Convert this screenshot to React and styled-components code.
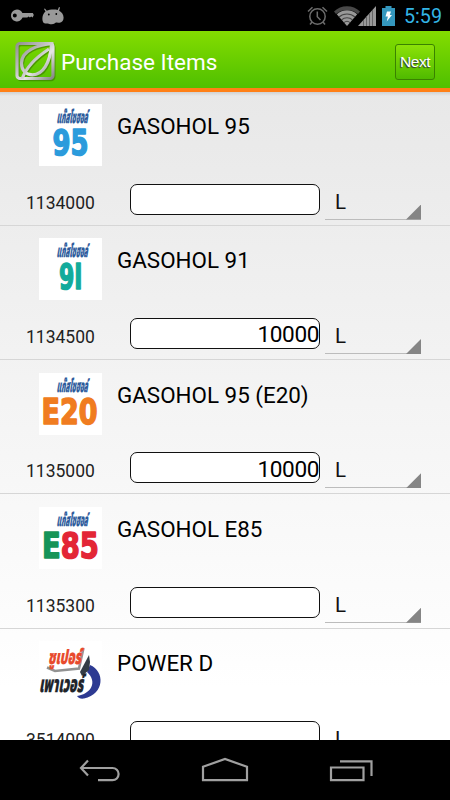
import React from 'react';
import styled, { createGlobalStyle } from 'styled-components';

const GlobalStyle = createGlobalStyle`
  * {
    box-sizing: border-box;
  }
  body {
    margin: 0;
    background: #000;
    font-family: Roboto, "Noto Sans", sans-serif;
  }
`;

const Screen = styled.div`
  width: 450px;
  height: 800px;
  display: flex;
  flex-direction: column;
  overflow: hidden;
  background: #000;
`;

const StatusBar = styled.div`
  flex: none;
  height: 31px;
  display: flex;
  align-items: center;
  justify-content: space-between;
  padding: 0 8px 0 11px;
`;

const StatusGroup = styled.div`
  display: flex;
  align-items: center;
  gap: ${(props) => props.$gap || 0}px;
  svg {
    display: block;
    overflow: visible;
  }
`;

const Clock = styled.span`
  margin-left: 3px;
  font-size: 19.7px;
  line-height: 31px;
  padding-top: 2px;
  color: #33b5e5;
`;

const ActionBar = styled.header`
  flex: none;
  height: 61px;
  display: flex;
  align-items: center;
  padding: 0 15px 0 14px;
  background: linear-gradient(#84dc00, #4fc000);
  border-bottom: 4px solid #ff7f16;
  svg {
    display: block;
    margin-top: 4px;
  }
`;

const Title = styled.h1`
  flex: 1;
  margin: 4px 0 0 5px;
  font-size: 22.5px;
  font-weight: 400;
  color: #fff;
`;

const NextButton = styled.button`
  width: 40px;
  height: 36px;
  margin-top: 4px;
  padding: 0;
  border: 1px solid #3a8200;
  border-radius: 3px;
  background: linear-gradient(#8ce208, #4fba00);
  font-family: "Liberation Sans", Arial, sans-serif;
  font-size: 15.5px;
  letter-spacing: -0.5px;
  color: #fff;
  text-shadow: -1px 1px 1px #333;
`;

const List = styled.ul`
  flex: 1;
  min-height: 0;
  margin: 0;
  padding: 0;
  overflow: hidden;
  list-style: none;
  background: linear-gradient(#d2d2d2, rgba(232, 232, 232, 0) 4px), linear-gradient(#e8e8e8, #fff 92%);
`;

const Item = styled.li`
  height: 134.4px;
  display: flex;
  flex-direction: column;
  justify-content: space-between;
  padding: 12.8px 29px 5px 26px;
  border-bottom: 1.4px solid #d6d6d6;

  &:first-child {
    height: 133.5px;
    padding-top: 12px;
  }
`;

const Product = styled.div`
  display: flex;
  align-items: flex-start;
  padding-left: 13px;
`;

const Thumb = styled.svg`
  flex: none;
  width: 63px;
  height: 62px;
  background: #fff;
  overflow: visible;
`;

const Name = styled.span`
  margin: 8px 0 0 15px;
  font-size: 22.4px;
  line-height: 28px;
  color: #000;
`;

const Order = styled.div`
  display: flex;
  align-items: flex-end;
`;

const Code = styled.span`
  width: 104px;
  font-size: 17.5px;
  line-height: 34px;
  color: #222;
`;

const Amount = styled.input`
  width: 190px;
  height: 31px;
  margin-bottom: 5px;
  padding: 3px 0 0;
  border: 1px solid #111;
  border-radius: 7px;
  background: #fff;
  font: 22.6px Roboto, sans-serif;
  letter-spacing: -0.4px;
  text-align: right;
  color: #000;
  outline: none;
`;

const Unit = styled.div`
  width: 96px;
  height: 34px;
  margin-left: 5px;
  padding-left: 10px;
  border-bottom: 1px solid #bcbcbc;
  display: flex;
  justify-content: space-between;
  font-size: 20.5px;
  line-height: 32px;
  color: #111;
`;

const Triangle = styled.i`
  align-self: flex-end;
  width: 15px;
  height: 15px;
  margin-bottom: -1px;
  background: #858585;
  clip-path: polygon(100% 0, 100% 100%, 0 100%);
`;

const NavBar = styled.nav`
  flex: none;
  height: 60px;
  display: flex;
  justify-content: center;
  align-items: center;
  gap: 80px;
  background: #000;
`;

const KeyIcon = () => (
  <svg width="23" height="13" viewBox="0 0 23 13">
    <path
      fill="#999"
      fillRule="evenodd"
      d="M6 .5a5.900 5.900 0 0 1 5.400 3.600h10.400l1 2-1.200 2.300-1.400-.8-1.300 1-1.300-1-1.300 1h-4.700A6 6 0 1 1 6 .5zM3.800 4.600a2 2 0 1 0 0 4 2 2 0 0 0 0-4z"
    />
  </svg>
);

const DroidIcon = () => (
  <svg width="22" height="18" viewBox="0 0 22 18">
    <path
      fill="#999"
      d="M3.500 4.500 2 2l.9-.5 1.900 2.200C7 2.700 12 2.100 15.700 3L17 0l1 .4-.9 3.400c2.700 1.300 4.500 4 4.500 7 0 3-1.800 4.900-4 4.900-1.200 0-2-.4-3.200-.3-1.400.2-2 1.700-4.800 1.900-1.700.1-2.500-.7-3.800-.8-1.700-.1-3.600.4-4.600-1.300C-.4 12 .5 6.800 3.500 4.500z"
    />
    <circle cx="6.800" cy="7.500" r=".9" fill="#000" />
    <circle cx="14.300" cy="7" r=".9" fill="#000" />
  </svg>
);

const AlarmIcon = () => (
  <svg width="21" height="20" viewBox="0 0 21 20" fill="none" stroke="#6c6c6c" strokeWidth="1.500">
    <circle cx="10.500" cy="10.500" r="7.700" />
    <path d="M10.300 5.500v5.300l3.200 3.200M1 5.500 5.500 1.300M15.500 1.300 20 5.500M5 16l-2 2.500M16 16l2 2.500" />
  </svg>
);

const WifiIcon = () => (
  <svg width="24" height="20" viewBox="0 0 24 20">
    <path d="M0 5.500a19 19 0 0 1 26 0L24 8A17 17 0 0 0 2 8z" fill="#484848" />
    <path d="M2.800 8.200a15.500 15.500 0 0 1 20.400 0L13 20z" fill="#999" />
    <path d="M5 11a12 12 0 0 1 16 0M7.500 13.800a8.200 8.200 0 0 1 11 0M10 16.600a4.500 4.500 0 0 1 6 0" fill="none" stroke="#444" strokeWidth="1.100" />
  </svg>
);

const SignalIcon = () => (
  <svg width="18" height="20" viewBox="0 0 18 20">
    <path d="M0 20 18 0v20z" fill="#999" />
    <path d="M5.500 14v6M8.500 10.500V20M11.500 7v13M14.500 4v16" stroke="#666" />
  </svg>
);

const BatteryIcon = () => (
  <svg width="13" height="20" viewBox="0 0 13 20">
    <path d="M3.500 0h6v2H13v18H0V2h3.500z" fill="#3497bd" />
    <path d="M5 5.500h4L7.800 9H10l-5.300 6.500 1.200-5H3.500z" fill="#fff" />
  </svg>
);

const leafPath = 'M39.500 2.500C22 4 7.500 10 7.500 22c0 8 5 11.800 11 11.800C29 33.800 36 22 37.500 4';
const stemPath = 'M8 38C13 24 24 15 35 8';

const LeafLogo = () => (
  <svg width="42" height="41" viewBox="0 0 42 41" fill="none">
    <defs>
      <linearGradient id="metal" x1="0" y1="0" x2="1" y2="1">
        <stop offset="0" stopColor="#929292" />
        <stop offset=".35" stopColor="#bdbdbd" />
        <stop offset=".6" stopColor="#e6e6e6" />
        <stop offset="1" stopColor="#858585" />
      </linearGradient>
    </defs>
    <g stroke="#397400" strokeWidth="3" opacity=".6" transform="translate(1 1.200)">
      <rect x="3" y="2.500" width="36" height="35" rx="3" />
      <path d={leafPath} />
      <path d={stemPath} />
    </g>
    <g stroke="url(#metal)" strokeWidth="3.200">
      <rect x="3" y="2.500" width="36" height="35" rx="3" />
      <path d={leafPath} />
      <path d={stemPath} />
    </g>
  </svg>
);

const Brand = ({ x, y, width, size = 17, color = '#2c5a9b', children }) => (
  <text
    x={x}
    y={y}
    transform="skewX(-10)"
    textLength={width}
    lengthAdjust="spacingAndGlyphs"
    fontFamily='"Noto Sans Thai", "Noto Sans", sans-serif'
    fontSize={size}
    fontWeight="900"
    fill={color}
    stroke={color}
    strokeWidth=".3"
  >
    {children}
  </text>
);

const GasoholThumb = ({ x, width, grade }) => (
  <Thumb viewBox="0 0 63 62">
    <Brand x="21" y="19.500" width="31">แก๊สโซฮอล์</Brand>
    <text
      x={x}
      y="51"
      textLength={width}
      lengthAdjust="spacingAndGlyphs"
      fontFamily='"DejaVu Sans", sans-serif'
      fontSize="36"
      fontWeight="700"
      strokeWidth="1.600"
      strokeLinejoin="round"
    >
      {grade.map(([chars, color]) => (
        <tspan key={chars} fill={color} stroke={color}>{chars}</tspan>
      ))}
    </text>
  </Thumb>
);

const PowerThumb = () => (
  <Thumb viewBox="0 0 63 62">
    <path d="M51 24c15 6 15 29-6 33.500-3 .6-6-.5-7-2.500C52 53 59 41 48 31z" fill="#2d3a92" />
    <path d="M50 14 41 31l2 4 7-6 1-8z" fill="#333c46" />
    <path d="M8 26.500 16 30l24-2.500L44.500 7" fill="none" stroke="#929292" strokeWidth="2.500" />
    <Brand x="13" y="23" width="33" size={20} color="#e84a2d">ซูเปอร์</Brand>
    <Brand x="9" y="51" width="44" size={23} color="#20242a">เพาเวอร์</Brand>
  </Thumb>
);

const items = [
  {
    name: 'GASOHOL 95',
    code: '1134000',
    amount: '',
    thumb: { x: 13.5, width: 36, grade: [['95', '#2b9bdc']] }
  },
  {
    name: 'GASOHOL 91',
    code: '1134500',
    amount: '10000',
    thumb: { x: 20, width: 23.5, grade: [['9I', '#13ab9b']] }
  },
  {
    name: 'GASOHOL 95 (E20)',
    code: '1135000',
    amount: '10000',
    thumb: { x: 2.5, width: 56, grade: [['E20', '#f07c20']] }
  },
  {
    name: 'GASOHOL E85',
    code: '1135300',
    amount: '',
    thumb: { x: 3, width: 57, grade: [['E', '#169458'], ['85', '#e32636']] }
  },
  { name: 'POWER D', code: '3514000', amount: '' }
];

const PurchaseItem = ({ item }) => (
  <Item>
    <Product>
      {item.thumb ? <GasoholThumb {...item.thumb} /> : <PowerThumb />}
      <Name>{item.name}</Name>
    </Product>
    <Order>
      <Code>{item.code}</Code>
      <Amount defaultValue={item.amount} />
      <Unit>
        L
        <Triangle />
      </Unit>
    </Order>
  </Item>
);

const App = () => (
  <Screen>
    <GlobalStyle />
    <StatusBar>
      <StatusGroup $gap={8}>
        <KeyIcon />
        <DroidIcon />
      </StatusGroup>
      <StatusGroup $gap={6}>
        <AlarmIcon />
        <StatusGroup>
          <WifiIcon />
          <SignalIcon />
        </StatusGroup>
        <BatteryIcon />
        <Clock>5:59</Clock>
      </StatusGroup>
    </StatusBar>
    <ActionBar>
      <LeafLogo />
      <Title>Purchase Items</Title>
      <NextButton>Next</NextButton>
    </ActionBar>
    <List>
      {items.map((item) => (
        <PurchaseItem key={item.code} item={item} />
      ))}
    </List>
    <NavBar>
      <svg width="44" height="26" viewBox="0 0 44 26" fill="none" stroke="#a0a0a0" strokeWidth="2.200">
        <path d="M11 3.500 4 11l7 7.500M4.500 11h31a6.100 6.100 0 0 1 0 12.200H21" />
      </svg>
      <svg width="48" height="26" viewBox="0 0 48 26" fill="none" stroke="#a0a0a0" strokeWidth="2.200">
        <path d="M2 23.200V9.800L24 2l22 7.800v13.400z" />
      </svg>
      <svg width="44" height="26" viewBox="0 0 44 26" fill="none" stroke="#a0a0a0" strokeWidth="2.200">
        <path d="M2 10.500h32.500v12.700H2zM11 4.400h31.500V19" />
      </svg>
    </NavBar>
  </Screen>
);

export default App;
